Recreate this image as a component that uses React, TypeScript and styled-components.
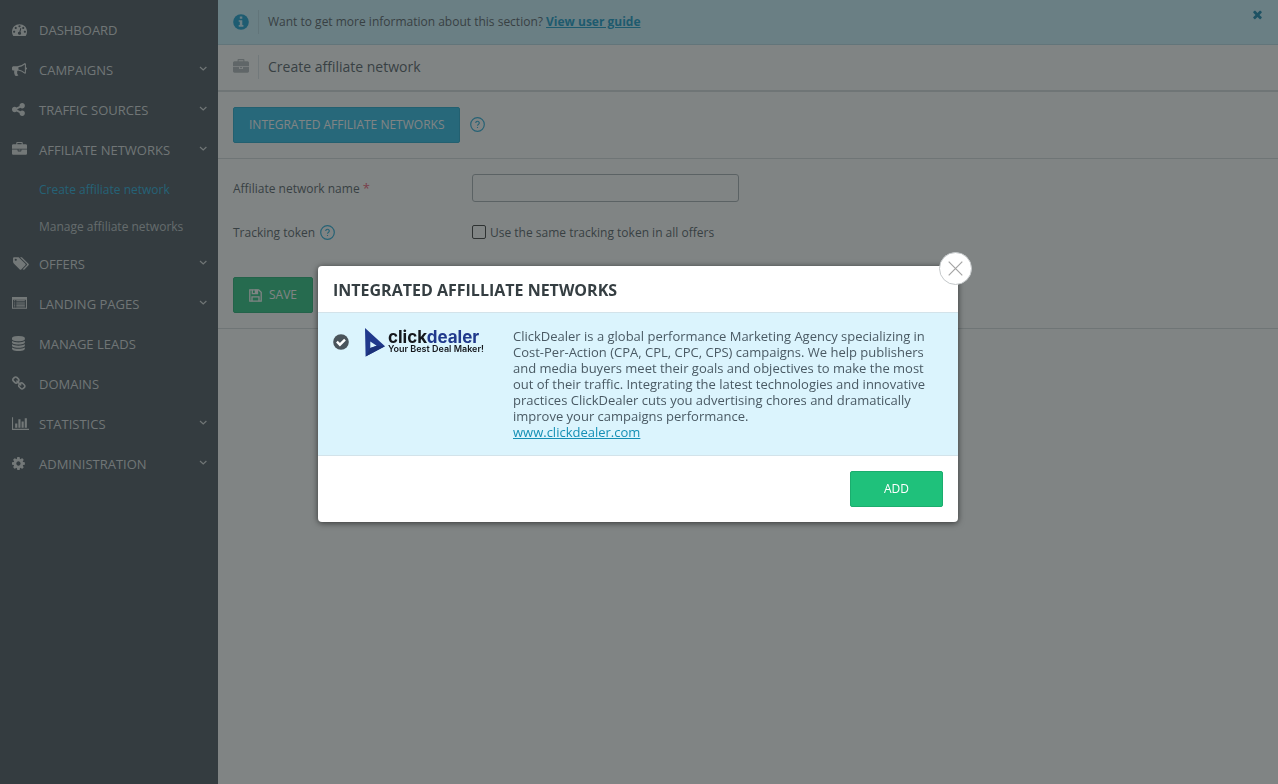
import React from "react";
import styled, { createGlobalStyle } from "styled-components";

const GlobalStyle = createGlobalStyle`
  *, *::before, *::after { box-sizing: border-box; }
  body {
    margin: 0;
    background: #ffffff;
    color: #4d565c;
    font-family: "Open Sans", "Liberation Sans", sans-serif;
    font-size: 12px;
    line-height: 16px;
  }
  button, input { font-family: inherit; margin: 0; }
`;

const paths = {
  dashboard:
    "M384 1152q0-53-37.5-90.5t-90.5-37.5-90.5 37.5-37.5 90.5 37.5 90.5 90.5 37.5 90.5-37.5 37.5-90.5zm192-448q0-53-37.5-90.5t-90.5-37.5-90.5 37.5-37.5 90.5 37.5 90.5 90.5 37.5 90.5-37.5 37.5-90.5zm428 481l101-382q6-26-7.5-48.5t-38.5-29.5-48 6.5-30 39.5l-101 382q-60 5-107 43.5t-63 98.5q-20 77 20 146t117 89 146-20 89-117q16-60-6-117t-72-91zm660-33q0-53-37.5-90.5t-90.5-37.5-90.5 37.5-37.5 90.5 37.5 90.5 90.5 37.5 90.5-37.5 37.5-90.5zm-640-640q0-53-37.5-90.5t-90.5-37.5-90.5 37.5-37.5 90.5 37.5 90.5 90.5 37.5 90.5-37.5 37.5-90.5zm448 192q0-53-37.5-90.5t-90.5-37.5-90.5 37.5-37.5 90.5 37.5 90.5 90.5 37.5 90.5-37.5 37.5-90.5zm320 448q0 261-141 483-19 29-54 29h-1402q-35 0-54-29-141-221-141-483 0-182 71-348t191-286 286-191 348-71 348 71 286 191 191 286 71 348z",
  bullhorn:
    "M1664 640q53 0 90.5 37.5t37.5 90.5-37.5 90.5-90.5 37.5v384q0 52-38 90t-90 38q-417-347-812-380-58 19-91 66t-31 100.5 40 92.5q-20 33-23 65.5t6 58 33.5 55 48 50 61.5 50.5q-29 58-111.5 83t-168.5 11.5-132-55.5q-7-23-29.5-87.5t-32-94.5-23-89-15-101 3.5-98.5 22-110.5h-122q-66 0-113-47t-47-113v-192q0-66 47-113t113-47h480q435 0 896-384 52 0 90 38t38 90v384zm-128 604v-954q-394 302-768 343v270q377 42 768 341z",
  share:
    "M1344 1024q133 0 226.5 93.5t93.5 226.5-93.5 226.5-226.5 93.5-226.5-93.5-93.5-226.5q0-12 2-34l-360-180q-92 86-218 86-133 0-226.5-93.5t-93.5-226.5 93.5-226.5 226.5-93.5q126 0 218 86l360-180q-2-22-2-34 0-133 93.5-226.5t226.5-93.5 226.5 93.5 93.5 226.5-93.5 226.5-226.5 93.5q-126 0-218-86l-360 180q2 22 2 34t-2 34l360 180q92-86 218-86z",
  briefcase:
    "M640 256h512v-128h-512v128zm1152 640v480q0 66-47 113t-113 47h-1472q-66 0-113-47t-47-113v-480h672v160q0 26 19 45t45 19h320q26 0 45-19t19-45v-160h672zm-768 0v128h-256v-128h256zm768-480v384h-1792v-384q0-66 47-113t113-47h352v-160q0-40 28-68t68-28h576q40 0 68 28t28 68v160h352q66 0 113 47t47 113z",
  tags:
    "M576 448q0-53-37.5-90.5t-90.5-37.5-90.5 37.5-37.5 90.5 37.5 90.5 90.5 37.5 90.5-37.5 37.5-90.5zm1067 576q0 53-37 90l-491 492q-39 37-91 37-53 0-90-37l-715-716q-38-37-64.5-101t-26.5-117v-416q0-52 38-90t90-38h416q53 0 117 26.5t102 64.5l715 714q37 39 37 91zm384 0q0 53-37 90l-491 492q-39 37-91 37-36 0-59-14t-53-45l470-470q37-37 37-90 0-52-37-91l-715-714q-38-38-102-64.5t-117-26.5h224q53 0 117 26.5t102 64.5l715 714q37 39 37 91z",
  list:
    "M0 128h1792v1408h-1792zM128 448v960h1536v-960zM256 512h128v128h-128zM512 512h1024v128h-1024zM256 768h128v128h-128zM512 768h1024v128h-1024zM256 1024h128v128h-128zM512 1024h1024v128h-1024zM256 1264h128v80h-128zM512 1264h1024v80h-1024z",
  database:
    "M896 768q237 0 443-43t325-127v170q0 69-103 128t-280 93.5-385 34.5-385-34.5-280-93.5-103-128v-170q119 84 325 127t443 43zm0 768q237 0 443-43t325-127v170q0 69-103 128t-280 93.5-385 34.5-385-34.5-280-93.5-103-128v-170q119 84 325 127t443 43zm0-384q237 0 443-43t325-127v170q0 69-103 128t-280 93.5-385 34.5-385-34.5-280-93.5-103-128v-170q119 84 325 127t443 43zm0-1152q208 0 385 34.5t280 93.5 103 128v128q0 69-103 128t-280 93.5-385 34.5-385-34.5-280-93.5-103-128v-128q0-69 103-128t280-93.5 385-34.5z",
  link:
    "M1520 1216q0-40-28-68l-208-208q-28-28-68-28-42 0-72 32 3 3 19 18.5t21.5 21.5 15 19 13 25.5 3.5 27.5q0 40-28 68t-68 28q-15 0-27.5-3.5t-25.5-13-19-15-21.5-21.5-18.5-19q-33 31-33 73 0 40 28 68l206 207q27 27 68 27 40 0 68-26l147-146q28-28 28-67zm-703-705q0-40-28-68l-206-207q-28-28-68-28-39 0-68 27l-147 146q-28 28-28 67 0 40 28 68l208 208q27 27 68 27 42 0 72-31-3-3-19-18.5t-21.5-21.5-15-19-13-25.5-3.5-27.5q0-40 28-68t68-28q15 0 27.5 3.5t25.5 13 19 15 21.5 21.5 18.5 19q33-31 33-73zm895 705q0 120-85 203l-147 146q-83 83-203 83-121 0-204-85l-206-207q-83-83-83-203 0-123 88-209l-88-88q-86 88-208 88-120 0-204-84l-208-208q-84-84-84-204t85-203l147-146q83-83 203-83 121 0 204 85l206 207q83 83 83 203 0 123-88 209l88 88q86-88 208-88 120 0 204 84l208 208q84 84 84 204z",
  chart:
    "M640 896v512h-256v-512h256zm384-512v1024h-256v-1024h256zm1024 1152v128h-2048v-1536h128v1408h1920zm-640-896v768h-256v-768h256zm384-384v1152h-256v-1152h256z",
  cog:
    "M1152 896q0-106-75-181t-181-75-181 75-75 181 75 181 181 75 181-75 75-181zm512-109v222q0 12-8 23t-20 13l-185 28q-19 54-39 91 35 50 107 138 10 12 10 25t-9 23q-27 37-99 108t-94 71q-12 0-26-9l-138-108q-44 23-91 38-16 136-29 186-7 28-36 28h-222q-14 0-24.5-8.5t-11.5-21.5l-28-184q-49-16-90-37l-141 107q-10 9-25 9-14 0-25-11-126-114-165-168-7-10-7-23 0-12 8-23 15-21 51-66.5t54-70.5q-27-50-41-99l-183-27q-13-2-21-12.5t-8-23.5v-222q0-12 8-23t19-13l186-28q14-46 39-92-40-57-107-138-10-12-10-24 0-10 9-23 26-36 98.5-107.5t94.5-71.5q13 0 26 10l138 107q44-23 91-38 16-136 29-186 7-28 36-28h222q14 0 24.5 8.5t11.5 21.5l28 184q49 16 90 37l142-107q9-9 24-9 13 0 25 10 129 119 165 170 7 8 7 22 0 12-8 23-15 21-51 66.5t-54 70.5q26 50 41 98l183 28q13 2 21 12.5t8 23.5z",
  times:
    "M1490 1322q0 40-28 68l-136 136q-28 28-68 28t-68-28l-294-294-294 294q-28 28-68 28t-68-28l-136-136q-28-28-28-68t28-68l294-294-294-294q-28-28-28-68t28-68l136-136q28-28 68-28t68 28l294 294 294-294q28-28 68-28t68 28l136 136q28 28 28 68t-28 68l-294 294 294 294q28 28 28 68z",
};

type IconName = keyof typeof paths;

/* Viewport width in icon units; the height is always 1792 units. */
const iconUnits: Partial<Record<IconName, number>> = { tags: 2048, chart: 2048 };
/* Icons whose drawing is inset from the left edge of its grid. */
const iconStart: Partial<Record<IconName, number>> = { share: 128, database: 128, link: 80, cog: 128 };

function Icon({ name, size = 15 }: { name: IconName; size?: number }) {
  const units = iconUnits[name] ?? 1792;
  return (
    <svg
      width={Math.round((size * units) / 1792)}
      height={size}
      viewBox={`${iconStart[name] ?? 0} 0 ${units} 1792`}
      fill="currentColor"
      fillRule={name === "list" ? "evenodd" : "nonzero"}
      aria-hidden="true"
    >
      <path d={paths[name]} />
    </svg>
  );
}

const Shell = styled.div`
  display: flex;
  min-height: 100vh;
`;

const Sidebar = styled.nav`
  flex: 0 0 218px;
  padding-top: 10px;
  background: #414b55;
`;

const Menu = styled.ul`
  margin: 0;
  padding: 0;
  list-style: none;
`;

const MenuLink = styled.a`
  display: flex;
  align-items: center;
  height: 40px;
  padding: 0 10px 0 12px;
  color: #d6dadb;
  font-size: 13px;
  text-decoration: none;
`;

const MenuIcon = styled.span`
  display: flex;
  flex: 0 0 27px;
  padding-bottom: 2px;
  color: #dfe2e2;
`;

const MenuLabel = styled.span`
  flex: 1;
`;

const MenuChevron = styled.span`
  display: flex;
  padding-bottom: 2px;
  color: #d6dadb;
`;

const SubLink = styled.a<{ $active?: boolean }>`
  display: flex;
  align-items: center;
  height: 37px;
  padding: 2px 10px 0 39px;
  color: ${(p) => (p.$active ? "#1caadc" : "#bcc1c4")};
  text-decoration: none;
`;

const Main = styled.main`
  flex: 1;
  min-width: 0;
`;

const Banner = styled.div`
  display: flex;
  align-items: center;
  height: 45px;
  padding: 0 14px 0 15px;
  background: #c8f2ff;
  border-bottom: 1px solid #b4dae6;
`;

const BarIcon = styled.span<{ $color: string; $line: string }>`
  display: flex;
  align-items: center;
  width: 26px;
  height: 24px;
  margin-right: 9px;
  border-right: 1px solid ${(p) => p.$line};
  color: ${(p) => p.$color};
`;

const BannerText = styled.p`
  flex: 1;
  margin: 0;
`;

const GuideLink = styled.a`
  color: #0996c8;
  font-weight: 700;
`;

const BannerClose = styled.button`
  display: flex;
  align-self: flex-start;
  padding: 8px 0;
  border: 0;
  background: none;
  color: #0a82ac;
`;

const TitleBar = styled.header`
  display: flex;
  align-items: center;
  height: 47px;
  padding: 0 15px 2px;
  border-bottom: 2px solid #d5dadc;
`;

const Title = styled.h1`
  margin: 0;
  font-size: 14px;
  font-weight: 400;
  line-height: 20px;
`;

const Section = styled.section`
  padding: 15px;
  border-bottom: 1px solid #d5dadc;
`;

const ActionRow = styled.div`
  display: flex;
  align-items: center;
  gap: 10px;
`;

const Button = styled.button<{ $tone: "blue" | "green"; $wide?: boolean }>`
  display: flex;
  align-items: center;
  justify-content: center;
  gap: 7px;
  height: 36px;
  min-width: ${(p) => (p.$wide ? "93px" : "80px")};
  padding: 0 15px;
  border: 1px solid ${(p) => (p.$tone === "blue" ? "#18a6cc" : "#1bad6e")};
  border-radius: 2px;
  background: ${(p) => (p.$tone === "blue" ? "#22b8e6" : "#1fc17b")};
  color: #ffffff;
  font-size: 12px;
  line-height: 16px;
`;

const HelpButton = styled.button`
  display: flex;
  height: 16px;
  padding: 0;
  border: 0;
  background: none;
  color: #1fa9d8;
`;

const Form = styled.form`
  padding: 15px;
  border-bottom: 1px solid #d5dadc;
`;

const Field = styled.div`
  display: grid;
  grid-template-columns: 239px 1fr;
  align-items: center;
  min-height: 28px;
  margin-bottom: 17px;
`;

const FieldLabel = styled.div`
  display: flex;
  align-items: center;
  gap: 5px;
`;

const Required = styled.span`
  color: #f0506e;
  font-size: 13px;
`;

const TextInput = styled.input`
  width: 267px;
  height: 28px;
  padding: 0 8px;
  border: 1px solid #a4abb0;
  border-radius: 3px;
  background: transparent;
`;

const CheckLabel = styled.label`
  display: flex;
  align-items: flex-start;
  gap: 4px;
`;

const Checkbox = styled.input`
  appearance: none;
  width: 14px;
  height: 14px;
  border: 1px solid #333333;
  border-radius: 2px;
  background: transparent;
`;

const FormActions = styled.div`
  padding-top: 13px;
`;

const Backdrop = styled.div`
  position: fixed;
  inset: 0;
  display: flex;
  align-items: center;
  justify-content: center;
  padding: 4px 2px 0 0;
  background: rgba(43, 50, 50, 0.6);
`;

const Dialog = styled.div`
  position: relative;
  width: 640px;
  max-width: 100%;
  border-radius: 4px;
  background: #ffffff;
  box-shadow: 0 1px 6px rgba(0, 0, 0, 0.6);
`;

const DialogTitle = styled.h2`
  margin: 0;
  padding: 14px 15px 12px;
  color: #353e42;
  font-size: 16px;
  font-weight: 700;
  line-height: 20px;
`;

const DialogClose = styled.button`
  position: absolute;
  top: -14px;
  right: -14px;
  display: flex;
  align-items: center;
  justify-content: center;
  width: 33px;
  height: 33px;
  padding: 0;
  border: 1px solid #c4c8ca;
  border-radius: 50%;
  background: #ffffff;
  color: #a4a4a4;
`;

const NetworkRow = styled.div`
  display: grid;
  grid-template-columns: 31px 149px 1fr;
  padding: 15px;
  border-top: 1px solid #d3e3ea;
  border-bottom: 1px solid #d3e3ea;
  background: #dbf4fd;
`;

const CheckMark = styled.span`
  display: flex;
  padding-top: 6px;
  color: #4a545b;
`;

const Logo = styled.div`
  display: flex;
  align-items: flex-start;
  gap: 3px;
`;

const LogoWords = styled.div`
  padding-top: 2px;
  color: #14171c;
  font-family: Inter, "Liberation Sans", sans-serif;
  white-space: nowrap;
`;

const LogoName = styled.div`
  font-size: 17px;
  font-weight: 700;
  line-height: 15px;
`;

const LogoAccent = styled.span`
  color: #20398c;
`;

const LogoTagline = styled.div`
  font-size: 9px;
  font-weight: 600;
  line-height: 8px;
`;

const Description = styled.p`
  margin: 0;
  color: #4a5a64;
  font-size: 13px;
  line-height: 16px;
`;

const SiteLink = styled.a`
  color: #148fb5;
`;

const DialogFooter = styled.footer`
  display: flex;
  justify-content: flex-end;
  padding: 15px;
`;

function Chevron() {
  return (
    <svg width="10" height="10" viewBox="0 0 10 10" fill="none" stroke="currentColor" strokeWidth="1.2" aria-hidden="true">
      <path d="M2 3l3.2 3L8.4 3" />
    </svg>
  );
}

function HelpIcon() {
  return (
    <svg width="15" height="15" viewBox="0 0 15 15" fill="none" stroke="currentColor" aria-hidden="true">
      <circle cx="7.5" cy="7.5" r="6.8" strokeWidth="1.2" />
      <path d="M5.7 5.9a1.8 1.7 0 1 1 2.9 1.4q-1.1.8-1.1 1.5M7.5 9.9v1.2" strokeWidth="1.1" />
    </svg>
  );
}

function InfoIcon() {
  return (
    <svg width="16" height="16" viewBox="0 0 16 16" aria-hidden="true">
      <circle cx="8" cy="8" r="7.8" fill="currentColor" />
      <path d="M6.8 2.6h2.5v2.1H6.8zM5.7 6.2h3.6v4.9h1.1v1.6H5.7v-1.6h1.1V7.8H5.7z" fill="#c8f2ff" />
    </svg>
  );
}

function SaveIcon() {
  return (
    <svg width="13" height="13" viewBox="0 0 13 13" fill="none" stroke="currentColor" strokeWidth="1.3" aria-hidden="true">
      <path d="M.8.8h8.9l2.5 2.5v8.9H.8z" />
      <path d="M3.3.8v3.9h5.2V.8M3 12.2V7.8h7v4.4" />
      <path d="M6.4 1.2h1.3v2.5H6.4z" fill="currentColor" />
    </svg>
  );
}

function SelectedIcon() {
  return (
    <svg width="16" height="16" viewBox="0 0 16 16" aria-hidden="true">
      <circle cx="8" cy="8" r="7.8" fill="currentColor" />
      <path d="M3.9 7.7l3 3L12 5.6" fill="none" stroke="#ffffff" strokeWidth="2.4" />
    </svg>
  );
}

function LogoMark() {
  return (
    <svg width="21" height="29" viewBox="0 0 21 29" aria-hidden="true">
      <path d="M1 0L21 18.3 1.6 28.5z M6.3 13.4v6.6l6.4-2.3z" fill="#20398c" fillRule="evenodd" />
      <path d="M1.6 28.5L6.3 20l6.4-2.3 8.3.6z" fill="#1b3179" />
    </svg>
  );
}

type Entry = { label: string; icon: IconName; open?: boolean; children?: string[] };

const entries: Entry[] = [
  { label: "DASHBOARD", icon: "dashboard" },
  { label: "CAMPAIGNS", icon: "bullhorn", open: true },
  { label: "TRAFFIC SOURCES", icon: "share", open: true },
  {
    label: "AFFILIATE NETWORKS",
    icon: "briefcase",
    open: true,
    children: ["Create affiliate network", "Manage affiliate networks"],
  },
  { label: "OFFERS", icon: "tags", open: true },
  { label: "LANDING PAGES", icon: "list", open: true },
  { label: "MANAGE LEADS", icon: "database" },
  { label: "DOMAINS", icon: "link" },
  { label: "STATISTICS", icon: "chart", open: true },
  { label: "ADMINISTRATION", icon: "cog", open: true },
];

export default function App() {
  return (
    <>
      <GlobalStyle />
      <Shell>
        <Sidebar>
          <Menu>
            {entries.map((entry) => (
              <li key={entry.label}>
                <MenuLink href="#">
                  <MenuIcon>
                    <Icon name={entry.icon} />
                  </MenuIcon>
                  <MenuLabel>{entry.label}</MenuLabel>
                  {entry.open && (
                    <MenuChevron>
                      <Chevron />
                    </MenuChevron>
                  )}
                </MenuLink>
                {entry.children && (
                  <Menu>
                    {entry.children.map((child, i) => (
                      <li key={child}>
                        <SubLink href="#" $active={i === 0}>
                          {child}
                        </SubLink>
                      </li>
                    ))}
                  </Menu>
                )}
              </li>
            ))}
          </Menu>
        </Sidebar>
        <Main>
          <Banner>
            <BarIcon $color="#0a9bd0" $line="#b4dae6">
              <InfoIcon />
            </BarIcon>
            <BannerText>
              Want to get more information about this section? <GuideLink href="#">View user guide</GuideLink>
            </BannerText>
            <BannerClose aria-label="Dismiss">
              <Icon name="times" size={13} />
            </BannerClose>
          </Banner>
          <TitleBar>
            <BarIcon $color="#b0b5b8" $line="#dde4e8">
              <Icon name="briefcase" size={16} />
            </BarIcon>
            <Title>Create affiliate network</Title>
          </TitleBar>
          <Section>
            <ActionRow>
              <Button $tone="blue">INTEGRATED AFFILIATE NETWORKS</Button>
              <HelpButton aria-label="About integrated networks">
                <HelpIcon />
              </HelpButton>
            </ActionRow>
          </Section>
          <Form>
            <Field>
              <label htmlFor="network-name">
                Affiliate network name <Required>*</Required>
              </label>
              <TextInput id="network-name" type="text" />
            </Field>
            <Field>
              <FieldLabel>
                Tracking token
                <HelpButton type="button" aria-label="About tracking tokens">
                  <HelpIcon />
                </HelpButton>
              </FieldLabel>
              <CheckLabel>
                <Checkbox type="checkbox" />
                Use the same tracking token in all offers
              </CheckLabel>
            </Field>
            <FormActions>
              <Button $tone="green" type="button">
                <SaveIcon />
                SAVE
              </Button>
            </FormActions>
          </Form>
        </Main>
      </Shell>
      <Backdrop>
        <Dialog role="dialog" aria-modal="true" aria-labelledby="dialog-title">
          <DialogTitle id="dialog-title">INTEGRATED AFFILLIATE NETWORKS</DialogTitle>
          <NetworkRow>
            <CheckMark>
              <SelectedIcon />
            </CheckMark>
            <Logo>
              <LogoMark />
              <LogoWords>
                <LogoName>
                  click<LogoAccent>dealer</LogoAccent>
                </LogoName>
                <LogoTagline>Your Best Deal Maker!</LogoTagline>
              </LogoWords>
            </Logo>
            <Description>
              ClickDealer is a global performance Marketing Agency specializing in Cost-Per-Action (CPA, CPL, CPC, CPS)
              campaigns. We help publishers and media buyers meet their goals and objectives to make the most out of
              their traffic. Integrating the latest technologies and innovative practices ClickDealer cuts you
              advertising chores and dramatically improve your campaigns performance.
              <br />
              <SiteLink href="#">www.clickdealer.com</SiteLink>
            </Description>
          </NetworkRow>
          <DialogFooter>
            <Button $tone="green" $wide>
              ADD
            </Button>
          </DialogFooter>
          <DialogClose aria-label="Close">
            <svg width="15" height="15" viewBox="0 0 15 15" stroke="currentColor" strokeWidth="1.2" aria-hidden="true">
              <path d="M.7.7l13.6 13.6M14.3.7L.7 14.3" />
            </svg>
          </DialogClose>
        </Dialog>
      </Backdrop>
    </>
  );
}
